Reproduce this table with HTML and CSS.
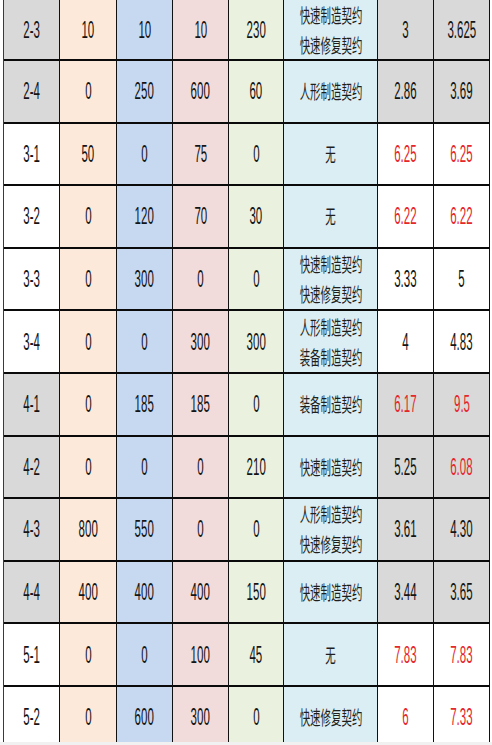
FILE: index.html
```html
<!DOCTYPE html>
<html lang="zh">
<head>
<meta charset="utf-8">
<title>表</title>
<link rel="stylesheet" href="styles.css">
</head>
<body>
<div class="frame">
<div class="grid">
  <div class="c g"><span class="n">2-3</span></div>
  <div class="c p"><span class="n">10</span></div>
  <div class="c b"><span class="n">10</span></div>
  <div class="c k"><span class="n">10</span></div>
  <div class="c e"><span class="n">230</span></div>
  <div class="c y"><span class="z">快速制造契约</span><span class="z">快速修复契约</span></div>
  <div class="c g"><span class="n">3</span></div>
  <div class="c g"><span class="n">3.625</span></div>

  <div class="c g"><span class="n">2-4</span></div>
  <div class="c p"><span class="n">0</span></div>
  <div class="c b"><span class="n">250</span></div>
  <div class="c k"><span class="n">600</span></div>
  <div class="c e"><span class="n">60</span></div>
  <div class="c y"><span class="z">人形制造契约</span></div>
  <div class="c g"><span class="n">2.86</span></div>
  <div class="c g"><span class="n">3.69</span></div>

  <div class="c w"><span class="n">3-1</span></div>
  <div class="c p"><span class="n">50</span></div>
  <div class="c b"><span class="n">0</span></div>
  <div class="c k"><span class="n">75</span></div>
  <div class="c e"><span class="n">0</span></div>
  <div class="c y"><span class="z">无</span></div>
  <div class="c w"><span class="n r">6.25</span></div>
  <div class="c w"><span class="n r">6.25</span></div>

  <div class="c w"><span class="n">3-2</span></div>
  <div class="c p"><span class="n">0</span></div>
  <div class="c b"><span class="n">120</span></div>
  <div class="c k"><span class="n">70</span></div>
  <div class="c e"><span class="n">30</span></div>
  <div class="c y"><span class="z">无</span></div>
  <div class="c w"><span class="n r">6.22</span></div>
  <div class="c w"><span class="n r">6.22</span></div>

  <div class="c w"><span class="n">3-3</span></div>
  <div class="c p"><span class="n">0</span></div>
  <div class="c b"><span class="n">300</span></div>
  <div class="c k"><span class="n">0</span></div>
  <div class="c e"><span class="n">0</span></div>
  <div class="c y"><span class="z">快速制造契约</span><span class="z">快速修复契约</span></div>
  <div class="c w"><span class="n">3.33</span></div>
  <div class="c w"><span class="n">5</span></div>

  <div class="c w"><span class="n">3-4</span></div>
  <div class="c p"><span class="n">0</span></div>
  <div class="c b"><span class="n">0</span></div>
  <div class="c k"><span class="n">300</span></div>
  <div class="c e"><span class="n">300</span></div>
  <div class="c y"><span class="z">人形制造契约</span><span class="z">装备制造契约</span></div>
  <div class="c w"><span class="n">4</span></div>
  <div class="c w"><span class="n">4.83</span></div>

  <div class="c g"><span class="n">4-1</span></div>
  <div class="c p"><span class="n">0</span></div>
  <div class="c b"><span class="n">185</span></div>
  <div class="c k"><span class="n">185</span></div>
  <div class="c e"><span class="n">0</span></div>
  <div class="c y"><span class="z">装备制造契约</span></div>
  <div class="c g"><span class="n r">6.17</span></div>
  <div class="c g"><span class="n r">9.5</span></div>

  <div class="c g"><span class="n">4-2</span></div>
  <div class="c p"><span class="n">0</span></div>
  <div class="c b"><span class="n">0</span></div>
  <div class="c k"><span class="n">0</span></div>
  <div class="c e"><span class="n">210</span></div>
  <div class="c y"><span class="z">快速制造契约</span></div>
  <div class="c g"><span class="n">5.25</span></div>
  <div class="c g"><span class="n r">6.08</span></div>

  <div class="c g"><span class="n">4-3</span></div>
  <div class="c p"><span class="n">800</span></div>
  <div class="c b"><span class="n">550</span></div>
  <div class="c k"><span class="n">0</span></div>
  <div class="c e"><span class="n">0</span></div>
  <div class="c y"><span class="z">人形制造契约</span><span class="z">快速修复契约</span></div>
  <div class="c g"><span class="n">3.61</span></div>
  <div class="c g"><span class="n">4.30</span></div>

  <div class="c g"><span class="n">4-4</span></div>
  <div class="c p"><span class="n">400</span></div>
  <div class="c b"><span class="n">400</span></div>
  <div class="c k"><span class="n">400</span></div>
  <div class="c e"><span class="n">150</span></div>
  <div class="c y"><span class="z">快速制造契约</span></div>
  <div class="c g"><span class="n">3.44</span></div>
  <div class="c g"><span class="n">3.65</span></div>

  <div class="c w"><span class="n">5-1</span></div>
  <div class="c p"><span class="n">0</span></div>
  <div class="c b"><span class="n">0</span></div>
  <div class="c k"><span class="n">100</span></div>
  <div class="c e"><span class="n">45</span></div>
  <div class="c y"><span class="z">无</span></div>
  <div class="c w"><span class="n r">7.83</span></div>
  <div class="c w"><span class="n r">7.83</span></div>

  <div class="c w"><span class="n">5-2</span></div>
  <div class="c p"><span class="n">0</span></div>
  <div class="c b"><span class="n">600</span></div>
  <div class="c k"><span class="n">300</span></div>
  <div class="c e"><span class="n">0</span></div>
  <div class="c y"><span class="z">快速修复契约</span></div>
  <div class="c w"><span class="n r">6</span></div>
  <div class="c w"><span class="n r">7.33</span></div>
</div>
</div>
</body>
</html>
```
FILE: styles.css
```css
html, body {
  margin: 0;
  padding: 0;
  background: #f1f1f1;
}
body {
  width: 492px;
  height: 745px;
  overflow: hidden;
  font-family: "Liberation Sans", "Noto Sans CJK SC", sans-serif;
  color: #141414;
}
.frame {
  height: 742px;
  overflow: hidden;
  background: #ffffff;
  padding-left: 3px;
}
.grid {
  display: grid;
  grid-template-columns: 56px 57px 56px 56px 55px 94px 56px 56px;
  grid-template-rows: 61px repeat(11, 62.6px);
  width: 486px;
  border-left: 1px solid #3a3a3a;
}
.c {
  box-sizing: border-box;
  border-right: 1px solid #111111;
  border-bottom: 2px solid #0a0a0a;
  display: flex;
  flex-direction: column;
  align-items: center;
  justify-content: center;
  overflow: hidden;
}
.g { background: #d9d9d9; }
.w { background: #ffffff; }
.p { background: #fde9d9; }
.b { background: #c6d9f1; }
.k { background: #f2dcdb; }
.e { background: #ebf1df; }
.y { background: #daeef3; }
.n {
  display: inline-block;
  font-size: 23px;
  line-height: 26px;
  transform: scaleX(0.5);
  white-space: nowrap;
}
.z {
  display: inline-block;
  font-family: "Noto Sans CJK SC", sans-serif;
  font-size: 19px;
  line-height: 30px;
  transform: scaleX(0.55);
  white-space: nowrap;
  color: #1e1e1e;
}
.r { color: #e5262b; }
```
